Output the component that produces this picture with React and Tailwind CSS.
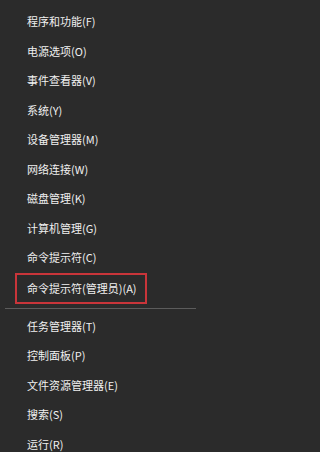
import React from "react";

const topItems = [
  "程序和功能(F)",
  "电源选项(O)",
  "事件查看器(V)",
  "系统(Y)",
  "设备管理器(M)",
  "网络连接(W)",
  "磁盘管理(K)",
  "计算机管理(G)",
  "命令提示符(C)",
];

const bottomItems = [
  "任务管理器(T)",
  "控制面板(P)",
  "文件资源管理器(E)",
  "搜索(S)",
  "运行(R)",
];

export default function App() {
  return (
    <div className="w-full min-w-[201px] h-[452px] overflow-hidden bg-[#2b2b2b] text-[#f0f0f0] text-[11px] font-['Noto_Sans_CJK_SC',sans-serif] leading-none">
      <div className="w-[201px]">
        <div className="pt-[7px]">
          {topItems.map((label) => (
            <div key={label} className="h-[29.5px] flex items-center pl-[27px]">
              {label}
            </div>
          ))}
          {/* highlighted item */}
          <div className="ml-[15px] w-[132px] h-[31px] border-2 border-[#c9353a] flex items-center pl-[10px]">
            命令提示符(管理员)(A)
          </div>
        </div>
        <div className="mt-[4px] mx-[5px] h-px bg-[#5c5c5c]" />
        <div className="pt-[3px]">
          {bottomItems.map((label) => (
            <div key={label} className="h-[29.5px] flex items-center pl-[27px]">
              {label}
            </div>
          ))}
        </div>
      </div>
    </div>
  );
}
